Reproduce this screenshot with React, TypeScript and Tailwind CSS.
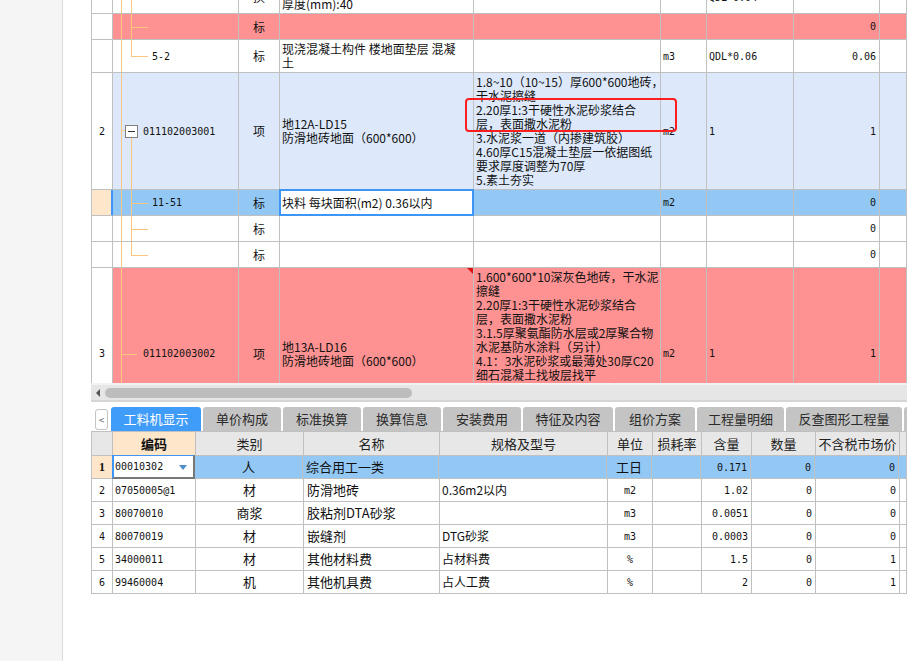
import React from 'react';

const mono = "font-['DejaVu_Sans_Mono',monospace] text-[10px]";
const cell = 'shrink-0 border-r border-b border-[#c0c0c0] relative';
const line = 'absolute bg-[#fbc77f]';

type TreeProps = {
  child?: 'full' | 'top' | 'none';
  branch?: boolean;
  text?: string;
  pad?: string;
  extra?: React.ReactNode;
};

function Tree({ child = 'full', branch = false, text, pad = 'pl-[39px]', extra }: TreeProps) {
  return (
    <>
      <span className={`${line} left-[8px] top-0 bottom-0 w-px`} />
      {child === 'full' && <span className={`${line} left-[18px] top-0 bottom-0 w-px`} />}
      {child === 'top' && <span className={`${line} left-[18px] top-0 h-1/2 w-px`} />}
      {branch && <span className={`${line} left-[18px] top-1/2 w-[17px] h-px`} />}
      {extra}
      {text && <div className={`h-full flex items-center ${pad} ${mono}`}>{text}</div>}
    </>
  );
}

type URowProps = {
  h: string;
  bg: string;
  num?: string;
  numBg?: string;
  tree: React.ReactNode;
  type?: string;
  name?: string[];
  desc?: string[];
  unit?: string;
  expr?: string;
  val?: string;
  mark?: boolean;
  sel?: boolean;
};

function URow(p: URowProps) {
  return (
    <div className={`flex ${p.h}`}>
      <div
        className={`${cell} w-[22px] border-l flex items-center justify-center ${p.numBg ?? 'bg-white'} ${mono} ${p.sel ? 'border-r-[#3d95f5] shadow-[inset_-1px_0_0_#3d95f5]' : ''}`}
      >
        {p.num}
      </div>
      <div className={`${cell} w-[126px] ${p.bg}`}>{p.tree}</div>
      <div className={`${cell} w-[41px] ${p.bg} flex items-center justify-center`}>{p.type}</div>
      <div className={`${cell} w-[194px] ${p.sel ? 'bg-white' : p.bg} flex flex-col justify-center pl-[2px] leading-[14px]`}>
        {p.name?.map((l, i) => (
          <div key={i} className="whitespace-nowrap">{l}</div>
        ))}
        {p.sel && (
          <span className="absolute left-[-1px] top-[-1px] right-[-1px] bottom-[-1px] border-2 border-[#3d95f5] z-10" />
        )}
        {p.mark && (
          <span className="absolute top-0 right-0 w-0 h-0 border-t-[6px] border-t-[#e01010] border-l-[6px] border-l-transparent" />
        )}
      </div>
      <div className={`${cell} w-[187px] ${p.bg} pl-[2px] pt-[2px] leading-[14px] overflow-hidden`}>
        {p.desc?.map((l, i) => (
          <div key={i} className="whitespace-nowrap">{l}</div>
        ))}
      </div>
      <div className={`${cell} w-[46px] ${p.bg} flex items-center pl-[2px] ${mono}`}>{p.unit}</div>
      <div className={`${cell} w-[87px] ${p.bg} flex items-center pl-[2px] ${mono}`}>{p.expr}</div>
      <div className={`${cell} w-[86px] ${p.bg} flex items-center justify-end pr-[3px] ${mono}`}>{p.val}</div>
      <div className={`${cell} flex-1 ${p.bg}`} />
    </div>
  );
}

const red = 'bg-[#fe9191]';
const pale = 'bg-[#dde9fb]';
const selBlue = 'bg-[#93c8f5]';
const orange = 'bg-[#fde6c9]';

const desc2 = [
  '1.8~10（10~15）厚600*600地砖，',
  '干水泥擦缝',
  '2.20厚1:3干硬性水泥砂浆结合',
  '层，表面撒水泥粉',
  '3.水泥浆一道（内掺建筑胶）',
  '4.60厚C15混凝土垫层一依据图纸',
  '要求厚度调整为70厚',
  '5.素土夯实',
];

const desc3 = [
  '1.600*600*10深灰色地砖，干水泥',
  '擦缝',
  '2.20厚1:3干硬性水泥砂浆结合',
  '层，表面撒水泥粉',
  '3.1.5厚聚氨酯防水层或2厚聚合物',
  '水泥基防水涂料（另计）',
  '4.1：3水泥砂浆或最薄处30厚C20',
  '细石混凝土找坡层找平',
  '5.水泥浆一道（内掺建筑胶）',
  '6.60厚C15混凝土垫层',
  '7.素土夯实',
];

const tabs = [
  { t: '工料机显示', w: 'w-[90px]' },
  { t: '单价构成', w: 'w-[78px]' },
  { t: '标准换算', w: 'w-[78px]' },
  { t: '换算信息', w: 'w-[78px]' },
  { t: '安装费用', w: 'w-[78px]' },
  { t: '特征及内容', w: 'w-[90px]' },
  { t: '组价方案', w: 'w-[80px]' },
  { t: '工程量明细', w: 'w-[87px]' },
  { t: '反查图形工程量', w: 'w-[116px]' },
  { t: '', w: 'w-[40px]' },
];

const lowRows = [
  ['00010302', '人', '综合用工一类', '', '工日', '', '0.171', '0', '0'],
  ['07050005@1', '材', '防滑地砖', '0.36m2以内', 'm2', '', '1.02', '0', '0'],
  ['80070010', '商浆', '胶粘剂DTA砂浆', '', 'm3', '', '0.0051', '0', '0'],
  ['80070019', '材', '嵌缝剂', 'DTG砂浆', 'm3', '', '0.0003', '0', '0'],
  ['34000011', '材', '其他材料费', '占材料费', '%', '', '1.5', '0', '1'],
  ['99460004', '机', '其他机具费', '占人工费', '%', '', '2', '0', '1'],
];

const lowHead = ['类别', '名称', '规格及型号', '单位', '损耗率', '含量', '数量', '不含税市场价'];
const lowW = ['w-[108px]', 'w-[136px]', 'w-[168px]', 'w-[45px]', 'w-[49px]', 'w-[50px]', 'w-[64px]', 'w-[84px]'];

function LowerGrid() {
  return (
    <div className="border-t border-[#c0c0c0]">
      <div className="flex h-[24px] bg-[#e7e7e7]">
        <div className={`${cell} w-[22px] border-l`} />
        <div className={`${cell} w-[83px] ${orange} flex items-center justify-center font-bold text-[13px]`}>编码</div>
        {lowHead.map((h, i) => (
          <div key={h} className={`${cell} ${lowW[i]} flex items-center justify-center text-[13px] text-[#222]`}>{h}</div>
        ))}
        <div className={`${cell} flex-1`} />
      </div>
      {lowRows.map((r, i) => {
        const first = i === 0;
        const bg = first ? selBlue : 'bg-white';
        return (
          <div key={r[0]} className="flex h-[23px]">
            <div
              className={`${cell} w-[22px] border-l flex items-center justify-center ${first ? `${orange} font-bold text-[12px] font-['Liberation_Serif',serif]` : `bg-white ${mono}`}`}
            >
              {i + 1}
            </div>
            {first ? (
              <div className="shrink-0 w-[83px] relative bg-white border-l-2 border-l-[#3d95f5] border-t border-t-[#3d95f5] border-r-2 border-r-[#777] border-b-2 border-b-[#777] -ml-px -mt-px h-[24px] flex items-center pl-[1px]">
                <span className={mono}>{r[0]}</span>
                <span className="absolute right-[6px] top-[9px] w-0 h-0 border-l-[4px] border-r-[4px] border-t-[5px] border-l-transparent border-r-transparent border-t-[#4f8ccc]" />
              </div>
            ) : (
              <div className={`${cell} w-[83px] bg-white flex items-center pl-[2px] ${mono}`}>{r[0]}</div>
            )}
            <div className={`${cell} ${lowW[0]} ${bg} flex items-center justify-center text-[13px]`}>{r[1]}</div>
            <div className={`${cell} ${lowW[1]} ${bg} flex items-center pl-[3px] text-[13px] whitespace-nowrap`}>{r[2]}</div>
            <div className={`${cell} ${lowW[2]} ${bg} flex items-center pl-[2px] text-[12px] whitespace-nowrap`}>{r[3]}</div>
            <div className={`${cell} ${lowW[3]} ${bg} flex items-center justify-center ${first ? 'text-[13px]' : mono}`}>{r[4]}</div>
            <div className={`${cell} ${lowW[4]} ${bg}`} />
            <div className={`${cell} ${lowW[5]} ${bg} flex items-center justify-end pr-[3px] ${mono}`}>{r[6]}</div>
            <div className={`${cell} ${lowW[6]} ${bg} flex items-center justify-end pr-[3px] ${mono}`}>{r[7]}</div>
            <div className={`${cell} ${lowW[7]} ${bg} flex items-center justify-end pr-[3px] ${mono}`}>{r[8]}</div>
            <div className={`${cell} flex-1 ${bg}`} />
          </div>
        );
      })}
    </div>
  );
}

export default function App() {
  return (
    <div className="flex h-[661px] w-full bg-white overflow-hidden font-['Noto_Sans_CJK_SC',sans-serif] text-[12px] text-[#111]">
      <div className="w-[63px] shrink-0 bg-[#f5f5f5] border-r border-[#dcdcdc]" />
      <div className="w-[28px] shrink-0 bg-white" />
      <div className="flex-1 min-w-0 flex flex-col overflow-hidden">
        {/* upper grid, scrolled so the first row is cut */}
        <div className="relative h-[383px] overflow-hidden shrink-0">
          <div className="-mt-[19px]">
            <URow
              h="h-[33px]"
              bg="bg-white"
              tree={<Tree />}
              type="换"
              name={['楼地面找平层 细石混凝土', '厚度(mm):40']}
              expr="QDL*0.04"
            />
            <URow h="h-[26px]" bg={red} tree={<Tree branch />} type="标" val="0" />
            <URow
              h="h-[33px]"
              bg="bg-white"
              tree={<Tree child="top" branch text="5-2" />}
              type="标"
              name={['现浇混凝土构件 楼地面垫层 混凝', '土']}
              unit="m3"
              expr="QDL*0.06"
              val="0.06"
            />
            <URow
              h="h-[117px]"
              bg={pale}
              num="2"
              tree={
                <Tree
                  child="none"
                  text="011102003001"
                  pad="pl-[30px]"
                  extra={
                    <>
                      <span className={`${line} left-[8px] top-[57px] w-[4px] h-px`} />
                      <span className="absolute left-[12px] top-[52px] w-[13px] h-[13px] border border-[#808080] bg-white flex items-center justify-center">
                        <span className="w-[7px] h-px bg-[#333]" />
                      </span>
                      <span className={`${line} left-[18px] top-[65px] bottom-0 w-px`} />
                    </>
                  }
                />
              }
              type="项"
              name={['地12A-LD15', '防滑地砖地面（600*600）']}
              desc={desc2}
              unit="m2"
              expr="1"
              val="1"
            />
            <URow
              h="h-[26px]"
              bg={selBlue}
              numBg={orange}
              sel
              tree={<Tree branch text="11-51" />}
              type="标"
              name={['块料 每块面积(m2) 0.36以内']}
              unit="m2"
              val="0"
            />
            <URow h="h-[26px]" bg="bg-white" tree={<Tree branch />} type="标" val="0" />
            <URow h="h-[26px]" bg="bg-white" tree={<Tree child="top" branch />} type="标" val="0" />
            <URow
              h="h-[172px]"
              bg={red}
              num="3"
              tree={
                <Tree
                  child="none"
                  text="011102003002"
                  pad="pl-[30px]"
                  extra={<span className={`${line} left-[8px] top-1/2 w-[16px] h-px`} />}
                />
              }
              type="项"
              name={['地13A-LD16', '防滑地砖地面（600*600）']}
              mark
              desc={desc3}
              unit="m2"
              expr="1"
              val="1"
            />
          </div>
          <span className="absolute left-[374px] top-[98px] w-[212px] h-[34px] border-2 border-[#ff1e1e] rounded-[4px] z-20" />
        </div>

        <div className="h-[2px] bg-[#f2f2f2] shrink-0" />
        <div className="h-[15px] bg-[#e6e6e6] flex items-center pl-[5px] shrink-0">
          <span className="w-0 h-0 border-r-[4px] border-r-[#555] border-y-[4px] border-y-transparent" />
          <span className="ml-[5px] w-[307px] h-[10px] rounded-full bg-[#bdbdbd]" />
        </div>
        <div className="h-[2px] bg-[#d6d6d6] shrink-0" />

        {/* tabs */}
        <div className="pt-[5px] flex items-center shrink-0">
          <div className="ml-[4px] w-[13px] h-[21px] border border-[#c4c4c4] rounded-[3px] bg-white flex items-center justify-center text-[10px] text-[#666] shrink-0">
            &lt;
          </div>
          <div className="ml-[3px] flex gap-[2px]">
            {tabs.map((t, i) => (
              <div
                key={i}
                className={`${t.w} h-[24px] shrink-0 rounded-t-[3px] flex items-center justify-center text-[13px] ${i === 0 ? 'bg-[#409cf9] text-white' : 'bg-[#c4c4c4] text-[#2a2a2a]'}`}
              >
                {t.t}
              </div>
            ))}
          </div>
        </div>

        <LowerGrid />
      </div>
    </div>
  );
}
